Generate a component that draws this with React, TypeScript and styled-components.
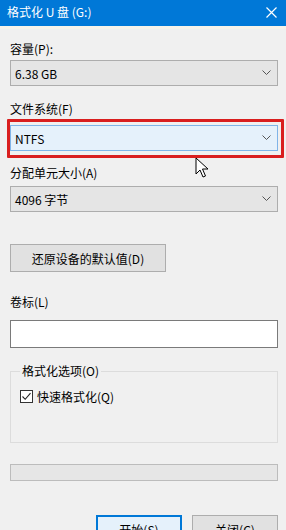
import React from "react";
import styled, { createGlobalStyle } from "styled-components";

const Global = createGlobalStyle`
  html, body { margin: 0; padding: 0; background: #f0f0f0; overflow: hidden; }
  body { font-family: "Noto Sans CJK SC", "Noto Sans", sans-serif; font-size: 12px; color: #000; }
`;

const Window = styled.div`
  width: 286px;
  height: 530px;
  background: #f0f0f0;
  display: flex;
  flex-direction: column;
  position: relative;
  overflow: hidden;
`;

const TitleBar = styled.div`
  height: 26px;
  background: #0078d7;
  color: #fff;
  display: flex;
  align-items: center;
  justify-content: space-between;
  padding: 0 7px 0 7px;
  font-size: 12px;
  flex-shrink: 0;
`;

const TitleText = styled.span`
  line-height: 1;
  margin-top: -2px;
`;

const CloseIcon = styled.svg`
  width: 11px;
  height: 11px;
  margin-right: 2px;
  margin-top: -2px;
`;

const TitleEdge = styled.div`
  height: 3px;
  background: #f7f3ea;
  flex-shrink: 0;
`;

const Body = styled.div`
  display: flex;
  flex-direction: column;
  padding: 0 8px 0 10px;
`;

const Label = styled.div<{ $top: number }>`
  margin-top: ${(p) => p.$top}px;
  height: 16px;
  line-height: 16px;
  font-size: 12px;
`;

const Combo = styled.div<{ $focused?: boolean; $mt?: number }>`
  margin-top: ${(p) => p.$mt ?? 0}px;
  height: 26px;
  box-sizing: border-box;
  border: 1px solid ${(p) => (p.$focused ? "#7fb4e8" : "#adadad")};
  background: ${(p) => (p.$focused ? "#e5f1fb" : "#e5e5e5")};
  display: flex;
  align-items: center;
  justify-content: space-between;
  padding: 0 6px 0 4px;
  font-size: 12px;
`;

const Chevron = styled.svg`
  width: 9px;
  height: 6px;
`;

const Highlight = styled.div`
  margin: 2px -6px 0 -3px;
  border: 3px solid #d91e1e;
  border-radius: 1px;
  padding: 3px 3px 4px 0;
`;

const Cursor = styled.svg`
  position: absolute;
  left: 195px;
  top: 157px;
  width: 14px;
  height: 22px;
`;

const Button = styled.div<{ $default?: boolean; $w: number }>`
  width: ${(p) => p.$w}px;
  height: 28px;
  box-sizing: border-box;
  border: ${(p) => (p.$default ? "2px solid #0078d7" : "1px solid #adadad")};
  background: ${(p) => (p.$default ? "#e5f1fb" : "#e1e1e1")};
  display: flex;
  align-items: center;
  justify-content: center;
  font-size: 12px;
`;

const ResetRow = styled.div`
  margin-top: 32px;
  display: flex;
`;

const TextInput = styled.div`
  margin-top: 10px;
  height: 28px;
  box-sizing: border-box;
  border: 1px solid #7a7a7a;
  background: #fff;
`;

const Group = styled.fieldset`
  margin: 15px 0 0 0;
  padding: 9px 7px 0 9px;
  height: 80px;
  box-sizing: border-box;
  border: 1px solid #dcdcdc;
  border-radius: 0;
`;

const Legend = styled.legend`
  padding: 0 2px;
  margin-left: 0;
  font-size: 12px;
  line-height: 16px;
`;

const CheckRow = styled.div`
  display: flex;
  align-items: center;
  gap: 4px;
`;

const CheckBox = styled.div`
  width: 13px;
  height: 13px;
  box-sizing: border-box;
  border: 1px solid #333;
  background: #fff;
  display: flex;
  align-items: center;
  justify-content: center;
`;

const Progress = styled.div`
  margin-top: 21px;
  height: 17px;
  box-sizing: border-box;
  border: 1px solid #bcbcbc;
  background: #e6e6e6;
`;

const ButtonRow = styled.div`
  margin-top: 34px;
  display: flex;
  justify-content: flex-end;
  gap: 10px;
`;

const ChevronIcon = () => (
  <Chevron viewBox="0 0 9 6">
    <path d="M0.5 0.5 L4.5 4.5 L8.5 0.5" stroke="#555" strokeWidth="1" fill="none" />
  </Chevron>
);

export default function App() {
  return (
    <>
      <Global />
      <Window>
        <TitleBar>
          <TitleText>格式化 U 盘 (G:)</TitleText>
          <CloseIcon viewBox="0 0 11 11">
            <path d="M0.5 0.5 L10.5 10.5 M10.5 0.5 L0.5 10.5" stroke="#fff" strokeWidth="1.2" fill="none" />
          </CloseIcon>
        </TitleBar>
        <TitleEdge />
        <Body>
          <Label $top={12}>容量(P):</Label>
          <Combo $mt={3}>
            <span>6.38 GB</span>
            <ChevronIcon />
          </Combo>
          <Label $top={15}>文件系统(F)</Label>
          <Highlight>
            <Combo $focused>
              <span>NTFS</span>
              <ChevronIcon />
            </Combo>
          </Highlight>
          <Label $top={7}>分配单元大小(A)</Label>
          <Combo $mt={5}>
            <span>4096 字节</span>
            <ChevronIcon />
          </Combo>
          <ResetRow>
            <Button $w={156}>还原设备的默认值(D)</Button>
          </ResetRow>
          <Label $top={22}>卷标(L)</Label>
          <TextInput />
          <Group>
            <Legend>格式化选项(O)</Legend>
            <CheckRow>
              <CheckBox>
                <svg width="11" height="11" viewBox="0 0 11 11">
                  <path d="M1.5 5.5 L4.2 8.3 L9.5 2.2" stroke="#222" strokeWidth="1.1" fill="none" />
                </svg>
              </CheckBox>
              <span>快速格式化(Q)</span>
            </CheckRow>
          </Group>
          <Progress />
          <ButtonRow>
            <Button $default $w={86}>开始(S)</Button>
            <Button $w={86}>关闭(C)</Button>
          </ButtonRow>
        </Body>
        <Cursor viewBox="0 0 14 22">
          <path d="M1 1 L1 17 L5 13 L8 20 L10.5 19 L7.5 12 L13 12 Z" fill="#fff" stroke="#000" strokeWidth="1" strokeLinejoin="round" />
        </Cursor>
      </Window>
    </>
  );
}
